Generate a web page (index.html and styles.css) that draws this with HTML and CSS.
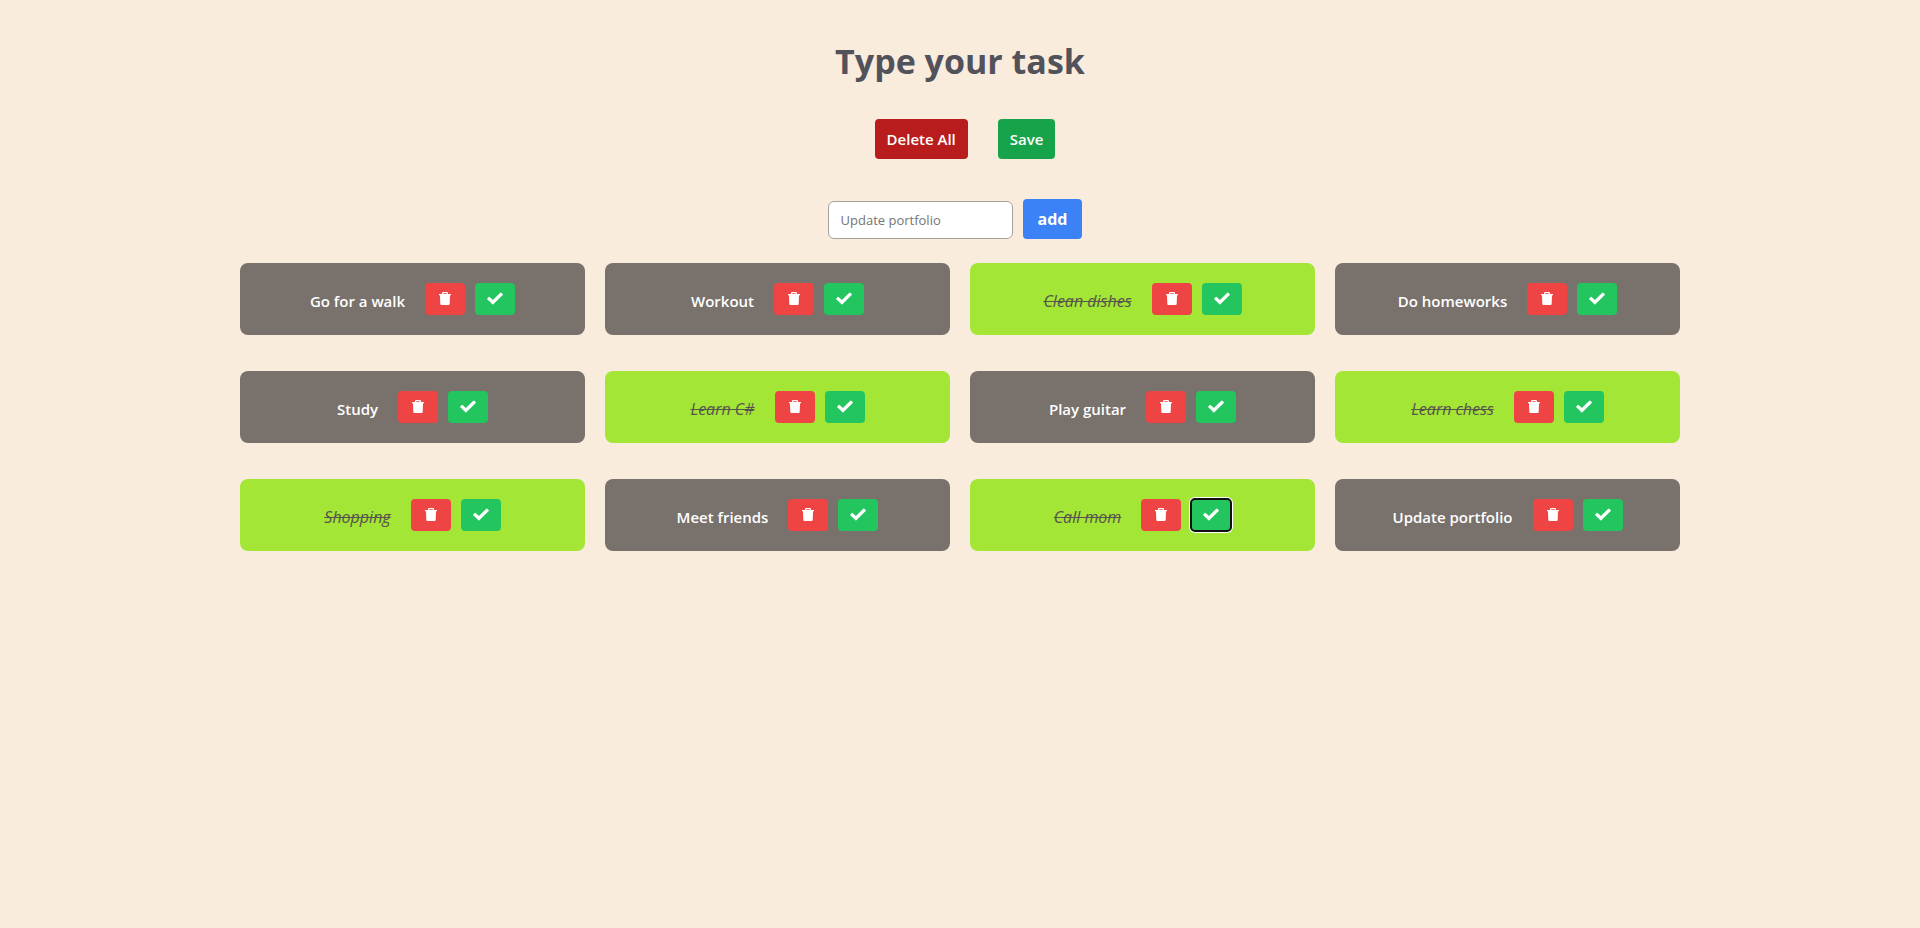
FILE: index.html
```
<!DOCTYPE html>
<html lang="en">
<head>
<meta charset="utf-8">
<meta name="viewport" content="width=device-width, initial-scale=1">
<title>Type your task</title>
<link rel="stylesheet" href="styles.css">
</head>
<body>
<svg class="sprite" aria-hidden="true">
  <symbol id="trash" viewBox="0 0 12 13">
    <path d="M3 2V1.200Q3 0 4.200 0H7.800Q9 0 9 1.200V2H12V3.200H11L10.700 12Q10.600 13 9.600 13H2.400Q1.400 13 1.300 12L1 3.200H0V2ZM4.200 2H7.800V1.200H4.200Z"/>
  </symbol>
  <symbol id="check" viewBox="0 0 16 13">
    <path d="M0.300 7.300Q-0.100 6.900 0.300 6.500L1.700 5Q2.200 4.600 2.600 5L5.900 8.100 13.300 0.700Q13.800 0.300 14.200 0.700L15.700 2.100Q16.100 2.500 15.700 3L6.400 12.300Q5.900 12.700 5.400 12.300Z"/>
  </symbol>
</svg>
<main class="page">
  <h1 class="title">Type your task</h1>
  <div class="actions">
    <button class="btn btn-delete-all" type="button">Delete All</button>
    <button class="btn btn-save" type="button">Save</button>
  </div>
  <form class="task-form">
    <input class="task-input" type="text" placeholder="Update portfolio" aria-label="Task">
    <button class="btn btn-add" type="button">add</button>
  </form>
  <ul class="tasks" id="tasks"></ul>
</main>
<script src="app.js"></script>
</body>
</html>
```
FILE: styles.css
```
*, *::before, *::after { box-sizing: border-box; }

body {
  margin: 0;
  min-height: 100vh;
  background: #faecdd;
  font-family: "Segoe UI", "Open Sans", "Noto Sans", sans-serif;
  font-size: 16px;
  line-height: 24px;
}

.sprite { display: none; }

.page {
  display: flex;
  flex-direction: column;
  align-items: center;
  padding-top: 41px;
}

.title {
  margin: 0 0 38px;
  color: #52525b;
  font-size: 34px;
  font-weight: 700;
  line-height: 40px;
}

.btn {
  height: 40px;
  padding: 0 12px;
  border: 0;
  border-radius: 4px;
  color: #fff;
  font: inherit;
  font-size: 15px;
  font-weight: 600;
  cursor: pointer;
}

.actions {
  display: flex;
  gap: 30px;
  margin: 0 0 40px 10px;
}

.btn-delete-all { background: #b91c1c; }
.btn-save { background: #16a34a; }

.task-form {
  display: flex;
  align-items: flex-end;
  gap: 10px;
  margin: 0 10px 24px 0;
}

.task-input {
  width: 185px;
  height: 38px;
  padding: 0 12px;
  border: 1px solid #a8a29e;
  border-radius: 6px;
  background: #fff;
  color: #44403c;
  font: inherit;
  font-size: 13px;
}
.task-input::placeholder { color: #757575; }

.btn-add {
  padding: 0 15px;
  background: #3b82f6;
  font-size: 16px;
  font-weight: 700;
}

.tasks {
  display: grid;
  grid-template-columns: repeat(4, 1fr);
  gap: 36px 20px;
  width: 75%;
  margin: 0;
  padding: 0;
  list-style: none;
}

.task {
  display: flex;
  justify-content: center;
  gap: 10px;
  padding: 20px 0;
  border-radius: 8px;
  background: #78716c;
  color: #fff;
}

.task-name {
  margin-right: 10px;
  padding-top: 6px;
  font-size: 15px;
  font-weight: 600;
}

.task-done { background: #a3e635; }
.task-done .task-name {
  color: #57534e;
  font-size: 16px;
  font-style: italic;
  font-weight: 400;
  text-decoration: line-through;
}

.icon-btn {
  display: flex;
  justify-content: center;
  width: 40px;
  height: 32px;
  padding: 9px 0 0;
  border: 0;
  border-radius: 4px;
  color: #fff;
  cursor: pointer;
}
.icon-btn svg { fill: currentColor; }
.icon-trash { width: 12px; height: 13px; }
.icon-check { width: 16px; height: 13px; }
.icon-btn-delete { background: #ef4444; }
.icon-btn-check { background: #22c55e; }
.icon-btn:focus {
  outline: 2px solid #101010;
  outline-offset: -1px;
  box-shadow: 0 0 0 2px #fff;
}
```
FILE: app.js
```
const tasks = [
  ["Go for a walk", false],
  ["Workout", false],
  ["Clean dishes", true],
  ["Do homeworks", false],
  ["Study", false],
  ["Learn C#", true],
  ["Play guitar", false],
  ["Learn chess", true],
  ["Shopping", true],
  ["Meet friends", false],
  ["Call mom", true],
  ["Update portfolio", false]
];

document.getElementById("tasks").innerHTML = tasks.map(([name, done]) => `
  <li class="task${done ? " task-done" : ""}">
    <span class="task-name">${name}</span>
    <button class="icon-btn icon-btn-delete" type="button" aria-label="Delete ${name}"><svg class="icon-trash"><use href="#trash"/></svg></button>
    <button class="icon-btn icon-btn-check" type="button" aria-label="Complete ${name}"><svg class="icon-check"><use href="#check"/></svg></button>
  </li>`).join("");

document.querySelector('[aria-label="Complete Call mom"]').focus();
```
